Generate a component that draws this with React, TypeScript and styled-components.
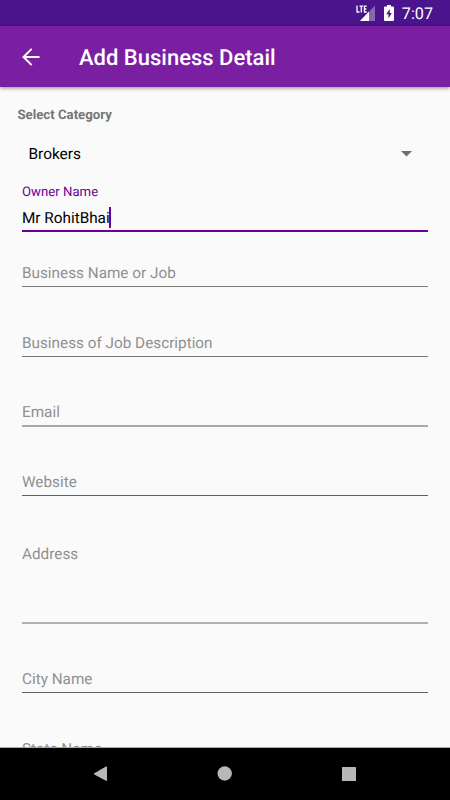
import React from 'react';
import styled, { createGlobalStyle } from 'styled-components';

const GlobalStyle = createGlobalStyle`
    * {
        box-sizing: border-box;
    }
    body {
        margin: 0;
        font-family: Roboto, sans-serif;
        text-rendering: geometricPrecision;
        background-color: #fafafa;
    }
`;

const Screen = styled.div`
    display: flex;
    flex-direction: column;
    width: 450px;
    height: 800px;
    overflow: hidden;
`;

const StatusBar = styled.div`
    display: flex;
    flex: none;
    justify-content: flex-end;
    height: 26px;
    padding-right: 17px;
    background-color: #4a148c;
    color: #ffffff;
`;
const SignalIcon = styled.svg`
    width: 20px;
    height: 26px;
    margin-right: 8px;
`;
const BatteryIcon = styled.svg`
    width: 10px;
    height: 26px;
    margin-right: 8px;
`;
const Clock = styled.span`
    font-size: 16.2px;
    line-height: 28px;
    font-weight: 450;
`;

const AppBar = styled.header`
    display: flex;
    flex: none;
    align-items: center;
    height: 61px;
    padding-left: 22px;
    background-color: #7b1fa2;
    box-shadow: 0 1px 4px rgba(0, 0, 0, 0.45);
    z-index: 1;
`;
const BackIcon = styled.svg`
    width: 18px;
    height: 18px;
    margin-right: 39px;
`;
const Title = styled.h1`
    margin: 4px 0 0;
    font-size: 22px;
    line-height: 28px;
    font-weight: 500;
    color: #ffffff;
`;

const Form = styled.main`
    flex: 1;
    min-height: 0;
    overflow: hidden;
    border-bottom: 1px solid #a8a8a8;
`;
const SectionLabel = styled.p`
    margin: 19px 0 0 17.5px;
    font-size: 13.2px;
    line-height: 20px;
    font-weight: 700;
    color: #757575;
`;
const Select = styled.div`
    display: flex;
    align-items: center;
    justify-content: space-between;
    height: 24px;
    margin-top: 16px;
    padding: 0 38px 0 28.5px;
    font-size: 15.4px;
    color: #000000;
`;
const Fields = styled.div`
    padding: 0 22px;
`;

type FieldBoxProps = {
    $height: number;
    $gap: number;
    $line: string;
    $thickness: number;
};
const FieldBox = styled.div<FieldBoxProps>`
    height: ${(props) => props.$height}px;
    padding-top: ${(props) => props.$gap}px;
    border-bottom: ${(props) => props.$thickness}px solid ${(props) => props.$line};
`;
const FloatingLabel = styled.p`
    margin: 0;
    font-size: 13.2px;
    line-height: 16px;
    color: #6a0095;
`;
const Value = styled.p`
    display: flex;
    align-items: center;
    margin: 6px 0 0;
    font-size: 15.3px;
    line-height: 20px;
    color: #000000;
`;
const Caret = styled.span`
    width: 2px;
    height: 21px;
    margin-left: -1px;
    background-color: #6a0095;
`;
const Hint = styled.p`
    margin: 0;
    font-size: 15.3px;
    line-height: 20px;
    color: #909090;
`;

const NavBar = styled.nav`
    flex: none;
    height: 52px;
    background-color: #000000;
`;

type FieldData = {
    hint: string;
    height: number;
    gap: number;
    line: string;
    thickness: number;
};

const fields: FieldData[] = [
    { hint: 'Business Name or Job', height: 55, gap: 31, line: '#7b7b7b', thickness: 1 },
    { hint: 'Business of Job Description', height: 70, gap: 46, line: '#757575', thickness: 1 },
    { hint: 'Email', height: 70, gap: 45, line: '#a8a8a8', thickness: 2 },
    { hint: 'Website', height: 69, gap: 45, line: '#606060', thickness: 1 },
    { hint: 'Address', height: 128, gap: 48, line: '#b0b0b0', thickness: 2 },
    { hint: 'City Name', height: 69, gap: 45, line: '#606060', thickness: 1 },
    { hint: 'State Name', height: 70, gap: 46, line: '#707070', thickness: 1 },
];

const Field: React.FC<FieldData> = (props) => {
    return (
        <FieldBox $height={props.height} $gap={props.gap} $line={props.line} $thickness={props.thickness}>
            <Hint>{props.hint}</Hint>
        </FieldBox>
    )
}

const App: React.FC = () => {
    return (
        <Screen>
            <GlobalStyle />
            <StatusBar>
                <SignalIcon viewBox="0 0 20 26" fill="none">
                    <path d="M19 5.5V21H4z" fill="#ffffff" fillOpacity="0.35" />
                    <path d="M13 11.5V21H4z" fill="#ffffff" />
                    <path d="M0 4.5h11v8.500H0z" fill="#4a148c" />
                    <path d="M1 5.5V12h2.5M3.5 6.2h3.6M5.3 6.2v6.4M10.7 6.2H8.4V12h2.3M8.4 9h2" stroke="#ffffff" strokeWidth="1.3" />
                </SignalIcon>
                <BatteryIcon viewBox="0 0 10 26">
                    <path d="M3 5h4v1.5h2a1 1 0 0 1 1 1V20a1 1 0 0 1-1 1H1a1 1 0 0 1-1-1V7.500a1 1 0 0 1 1-1h2z" fill="#ffffff" />
                    <path d="M5.800 9L2.300 14.300h2.200V18.500L7.800 12.900H5.800z" fill="#4a148c" />
                </BatteryIcon>
                <Clock>7:07</Clock>
            </StatusBar>
            <AppBar>
                <BackIcon viewBox="0 0 18 18" fill="none" stroke="#ffffff" strokeWidth="2">
                    <path d="M17.500 9H1.700M9.700 0.900L1.500 9l8.200 8.100" />
                </BackIcon>
                <Title>Add Business Detail</Title>
            </AppBar>
            <Form>
                <SectionLabel>Select Category</SectionLabel>
                <Select>
                    Brokers
                    <svg width="11" height="6" viewBox="0 0 11 6">
                        <path d="M0 0h11L5.500 5.500z" fill="#6e6e6e" />
                    </svg>
                </Select>
                <Fields>
                    <FieldBox $height={66} $gap={19} $line="#6a0095" $thickness={2}>
                        <FloatingLabel>Owner Name</FloatingLabel>
                        <Value>Mr RohitBhai<Caret /></Value>
                    </FieldBox>
                    {fields.map((field) => (
                        <Field key={field.hint} {...field} />
                    ))}
                </Fields>
            </Form>
            <NavBar>
                <svg width="450" height="52" viewBox="0 0 450 52" fill="#b8b8b8">
                    <path d="M94.300 25.200L106 18.500q1-.4 1 .5v13.300q0 1-1 .5L94.300 26.400q-.8-.6 0-1.200z" />
                    <circle cx="224.700" cy="25.500" r="7.200" />
                    <rect x="342" y="19" width="14" height="14" rx="0.600" />
                </svg>
            </NavBar>
        </Screen>
    )
}

export default App;
